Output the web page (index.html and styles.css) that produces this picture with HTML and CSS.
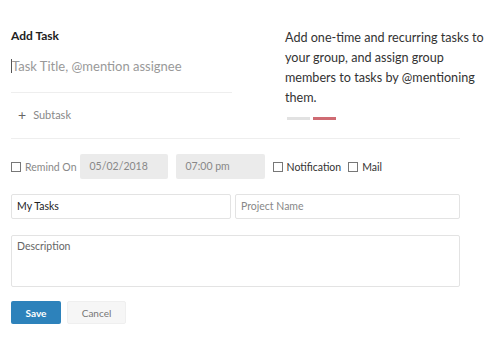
FILE: index.html
```html
<!DOCTYPE html>
<html lang="en">
<head>
    <meta charset="UTF-8">
    <meta name="viewport" content="width=device-width, initial-scale=1.0">
    <title>Add Task</title>
    <link rel="stylesheet" href="styles.css">
</head>
<body>
    <div class="task-form">

        <!-- Title and help text -->
        <div class="top">
            <div class="left">
                <h1 class="heading">Add Task</h1>
                <div class="title-input"><span class="caret"></span>Task Title, @mention assignee</div>
                <div class="subtask"><span class="plus">+</span>Subtask</div>
            </div>
            <div class="help">
                <p>Add one-time and recurring tasks to your group, and assign group members to tasks by @mentioning them.</p>
                <div class="dots">
                    <span class="dot"></span>
                    <span class="dot active"></span>
                </div>
            </div>
        </div>

        <div class="divider"></div>

        <!-- Reminder row -->
        <div class="remind-row">
            <label class="check muted"><span class="box"></span>Remind On</label>
            <div class="pill date">05/02/2018</div>
            <div class="pill time">07:00 pm</div>
            <label class="check"><span class="box"></span>Notification</label>
            <label class="check"><span class="box"></span>Mail</label>
        </div>

        <div class="field-row">
            <div class="field list">My Tasks</div>
            <div class="field project placeholder">Project Name</div>
        </div>

        <div class="field description placeholder">Description</div>

        <div class="actions">
            <button class="btn save">Save</button>
            <button class="btn cancel">Cancel</button>
        </div>
    </div>
</body>
</html>
```

FILE: styles.css
```css
/* General Styles */

body {
    margin: 0;
    background: #fff;
    font-family: "Lato", "Liberation Sans", sans-serif;
    color: #333;
}

.task-form {
    padding: 0 11px;
}

.top {
    display: flex;
}

.left {
    flex: none;
    width: 221px;
}

.heading {
    margin: 29px 0 0;
    font-size: 12px;
    line-height: 14px;
    font-weight: bold;
    color: #222;
}

.title-input {
    display: flex;
    align-items: center;
    height: 20px;
    margin-top: 13px;
    padding-bottom: 16px;
    border-bottom: 1px solid #eee;
    font-size: 13px;
    color: #999;
}

.caret {
    width: 1px;
    height: 14px;
    background: #555;
}

.subtask {
    display: flex;
    align-items: center;
    height: 14px;
    margin-top: 14px;
    padding-left: 7px;
    font-size: 11px;
    color: #888;
}

.plus {
    font-size: 14px;
    color: #666;
    margin-right: 7px;
}

.help {
    flex: 1;
    margin-left: 53px;
}

.help p {
    margin: 28px 0 0;
    font-size: 12.6px;
    line-height: 20px;
    color: #333;
}

.dots {
    display: flex;
    gap: 3px;
    margin-top: 9px;
    padding-left: 2px;
}

.dot {
    width: 23px;
    height: 3px;
    background: #e2e2e2;
}

.dot.active {
    background: #cf6b73;
}

.divider {
    width: 449px;
    margin-top: 17px;
    border-top: 1px solid #eee;
}

/* Reminder row */
.remind-row {
    display: flex;
    align-items: center;
    margin-top: 15px;
    height: 25px;
}

.check {
    display: flex;
    align-items: center;
    font-size: 10.5px;
    color: #333;
    margin-right: 7px;
}

.check.muted {
    color: #888;
    margin-right: 3px;
}

.box {
    width: 8px;
    height: 8px;
    border: 1px solid #777;
    margin-right: 4px;
}

.pill {
    box-sizing: border-box;
    width: 88px;
    height: 25px;
    line-height: 25px;
    padding-left: 10px;
    margin-right: 8px;
    background: #ebebeb;
    border-radius: 2px;
    font-size: 10.5px;
    color: #888;
}

.pill.time {
    width: 89px;
}

/* Inputs */
.field-row {
    display: flex;
    gap: 4px;
    margin-top: 15px;
}

.field {
    box-sizing: border-box;
    height: 25px;
    line-height: 23px;
    padding-left: 5px;
    border: 1px solid #e3e3e3;
    border-radius: 2px;
    font-size: 10.5px;
    color: #222;
}

.field.list {
    width: 220px;
}

.field.project {
    width: 225px;
}

.placeholder {
    color: #888;
}

.field.description {
    width: 449px;
    height: 52px;
    margin-top: 16px;
    line-height: 18px;
    padding-top: 1px;
    color: #666;
}

.actions {
    display: flex;
    gap: 6px;
    margin-top: 14px;
}

.btn {
    height: 23px;
    border: 0;
    border-radius: 2px;
    font-family: "Lato", "Liberation Sans", sans-serif;
    font-size: 10px;
    padding: 0;
}

.btn.save {
    width: 50px;
    background: #2d82bb;
    color: #fff;
    font-weight: bold;
}

.btn.cancel {
    width: 59px;
    background: #f6f6f6;
    border: 1px solid #efefef;
    color: #777;
}
```
